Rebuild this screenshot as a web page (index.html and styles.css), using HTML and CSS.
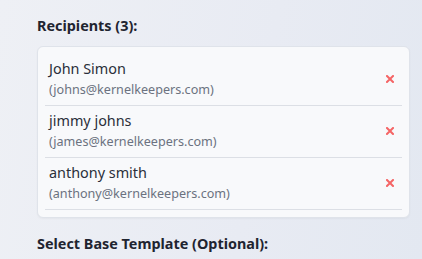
FILE: index.html
```html
<!DOCTYPE html>
<html>
<head>
<meta charset="utf-8">
<link rel="stylesheet" href="styles.css">
</head>
<body>
<div class="panel">
  <div class="label">Recipients (3):</div>
  <div class="card">
    <div class="row">
      <div class="info">
        <div class="name">John Simon</div>
        <div class="email">(johns@kernelkeepers.com)</div>
      </div>
      <button class="remove"><svg width="8" height="8" viewBox="0 0 8 8"><path d="M1 1L7 7M7 1L1 7" stroke="#f56565" stroke-width="2" stroke-linecap="square"/></svg></button>
    </div>
    <div class="row">
      <div class="info">
        <div class="name">jimmy johns</div>
        <div class="email">(james@kernelkeepers.com)</div>
      </div>
      <button class="remove"><svg width="8" height="8" viewBox="0 0 8 8"><path d="M1 1L7 7M7 1L1 7" stroke="#f56565" stroke-width="2" stroke-linecap="square"/></svg></button>
    </div>
    <div class="row">
      <div class="info">
        <div class="name">anthony smith</div>
        <div class="email">(anthony@kernelkeepers.com)</div>
      </div>
      <button class="remove"><svg width="8" height="8" viewBox="0 0 8 8"><path d="M1 1L7 7M7 1L1 7" stroke="#f56565" stroke-width="2" stroke-linecap="square"/></svg></button>
    </div>
  </div>
  <div class="label label-next">Select Base Template (Optional):</div>
</div>
</body>
</html>
```
FILE: styles.css
```css
html, body {
  margin: 0;
  padding: 0;
  height: 100%;
}
body {
  background: linear-gradient(100deg, #eef0f5 0%, #e8ebf3 60%, #e3e8f1 100%);
  font-family: "Noto Sans", "Open Sans", sans-serif;
  color: #2d3748;
  overflow: hidden;
}
.panel {
  padding: 16px 12px 0 37px;
}
.label {
  font-size: 14.4px;
  font-weight: 700;
  line-height: 20px;
  color: #1f2430;
  margin-bottom: 10px;
}
.label-next {
  margin-top: 16px;
}
.card {
  background: #f8f9fb;
  border: 1px solid #dfe3ea;
  border-radius: 6px;
  padding: 7px 7px 7px 7px;
  box-shadow: 0 1px 2px rgba(0,0,0,0.04);
}
.row {
  display: flex;
  align-items: center;
  justify-content: space-between;
  padding: 4px 4px 5px 4px;
  border-bottom: 1px solid #dcdfe5;
}
.info {
  display: flex;
  flex-direction: column;
}
.name {
  font-size: 14.4px;
  line-height: 22px;
  color: #2a2f3a;
}
.email {
  font-size: 12.6px;
  line-height: 20px;
  color: #6b7280;
}
.remove {
  border: none;
  background: none;
  padding: 0;
  margin-right: 4px;
  width: 8px;
  height: 8px;
  display: flex;
}
```
